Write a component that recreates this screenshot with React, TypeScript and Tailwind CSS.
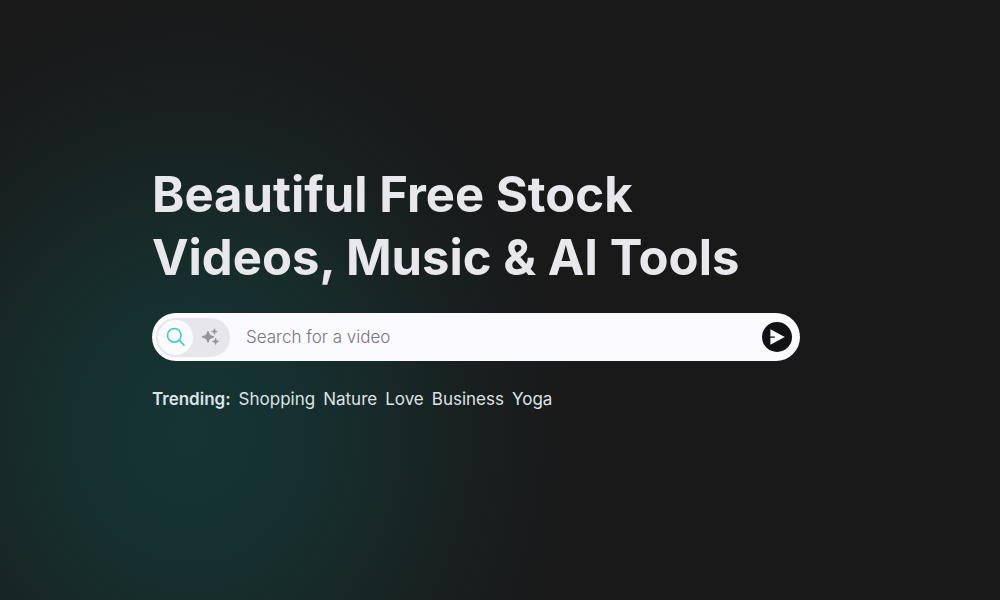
import React, { useState } from 'react';

const trending = ['Shopping', 'Nature', 'Love', 'Business', 'Yoga'];

const SearchIcon = () => (
  <svg viewBox="0 0 20 20" className="w-5 h-5" fill="none" stroke="currentColor" strokeWidth="1.7" aria-hidden="true">
    <circle cx="8.3" cy="8.3" r="6.8" />
    <path d="M13.2 13.2 18 18.2" strokeLinecap="round" />
  </svg>
);

const SparklesIcon = () => (
  <svg viewBox="0 0 20 20" className="w-5 h-5" fill="currentColor" aria-hidden="true">
    <path d="M7 4.4C7.9 8 8.9 9 12.6 9.8C8.9 10.6 7.9 11.6 7 15.2C6.1 11.6 5.1 10.6 1.4 9.8C5.1 9 6.1 8 7 4.4Z" stroke="currentColor" strokeWidth="1.2" strokeLinejoin="round" />
    <path d="M13.4 1.8C13.9 3.7 14.4 4.2 16.2 4.6C14.4 5 13.9 5.5 13.4 7.4C12.9 5.5 12.4 5 10.6 4.6C12.4 4.2 12.9 3.7 13.4 1.8Z" stroke="currentColor" strokeWidth="0.7" />
    <path d="M14.6 11.2C15.1 13.3 15.7 13.9 17.8 14.4C15.7 14.9 15.1 15.5 14.6 17.6C14.1 15.5 13.5 14.9 11.4 14.4C13.5 13.9 14.1 13.3 14.6 11.2Z" stroke="currentColor" strokeWidth="0.7" />
  </svg>
);

const SendIcon = () => (
  <svg viewBox="0 0 30 30" className="w-[30px] h-[30px]" aria-hidden="true">
    <path d="M8.4 7.2 22.8 15 8.4 22.8V15.8H12.8V14.4H8.4Z" fill="#fbfaff" />
  </svg>
);

const SearchBar = () => {
  const [mode, setMode] = useState('search');

  return (
    <form
      role="search"
      onSubmit={(e) => e.preventDefault()}
      className="flex items-center w-full h-12 pl-1 pr-2 rounded-full bg-[#fbfaff]"
    >
      {/* Mode toggle */}
      <div className="flex items-center h-[39px] shrink-0 px-0.5 rounded-full bg-[#e7e6ea]">
        <button
          type="button"
          aria-label="Keyword search"
          aria-pressed={mode === 'search'}
          onClick={() => setMode('search')}
          className="flex items-center justify-center w-[35px] h-[35px] rounded-full text-[#42cbd0] aria-pressed:bg-[#fbfaff]"
        >
          <SearchIcon />
        </button>
        <button
          type="button"
          aria-label="AI search"
          aria-pressed={mode === 'ai'}
          onClick={() => setMode('ai')}
          className="flex items-center justify-center w-[35px] h-[35px] rounded-full text-[#949398] aria-pressed:bg-[#fbfaff]"
        >
          <SparklesIcon />
        </button>
      </div>

      <input
        type="text"
        aria-label="Search for a video"
        placeholder="Search for a video"
        className="flex-1 min-w-0 h-full px-4 bg-transparent outline-none text-[17px] font-light text-[#17171a] placeholder:text-[#77767b]"
      />

      <button
        type="submit"
        aria-label="Search"
        className="flex items-center justify-center shrink-0 rounded-full bg-[#111214]"
      >
        <SendIcon />
      </button>
    </form>
  );
};

export default function App() {
  return (
    <main className="min-h-screen flex flex-col justify-center px-6 pb-6 bg-[#191919] bg-[radial-gradient(390px_440px_at_19%_72%,#153433_0%,#153231_22%,#172a29_48%,#182120_70%,#191b1c_88%,#191919_100%)] font-[Inter,sans-serif]">
      <section className="w-full max-w-[696px] mx-auto md:pr-12 space-y-6">
        <h1 className="text-[49px] leading-[63px] font-bold text-[#e8e8ec]">
          Beautiful Free Stock
          <br />
          Videos, Music &amp; AI Tools
        </h1>

        <SearchBar />

        {/* Trending searches */}
        <nav aria-label="Trending" className="flex flex-wrap gap-x-2 text-[17px] leading-7 text-[#dfe2e4]">
          <span className="font-semibold">Trending:</span>
          {trending.map((term) => (
            <a key={term} href={`#${term.toLowerCase()}`} className="hover:underline">
              {term}
            </a>
          ))}
        </nav>
      </section>
    </main>
  );
}
